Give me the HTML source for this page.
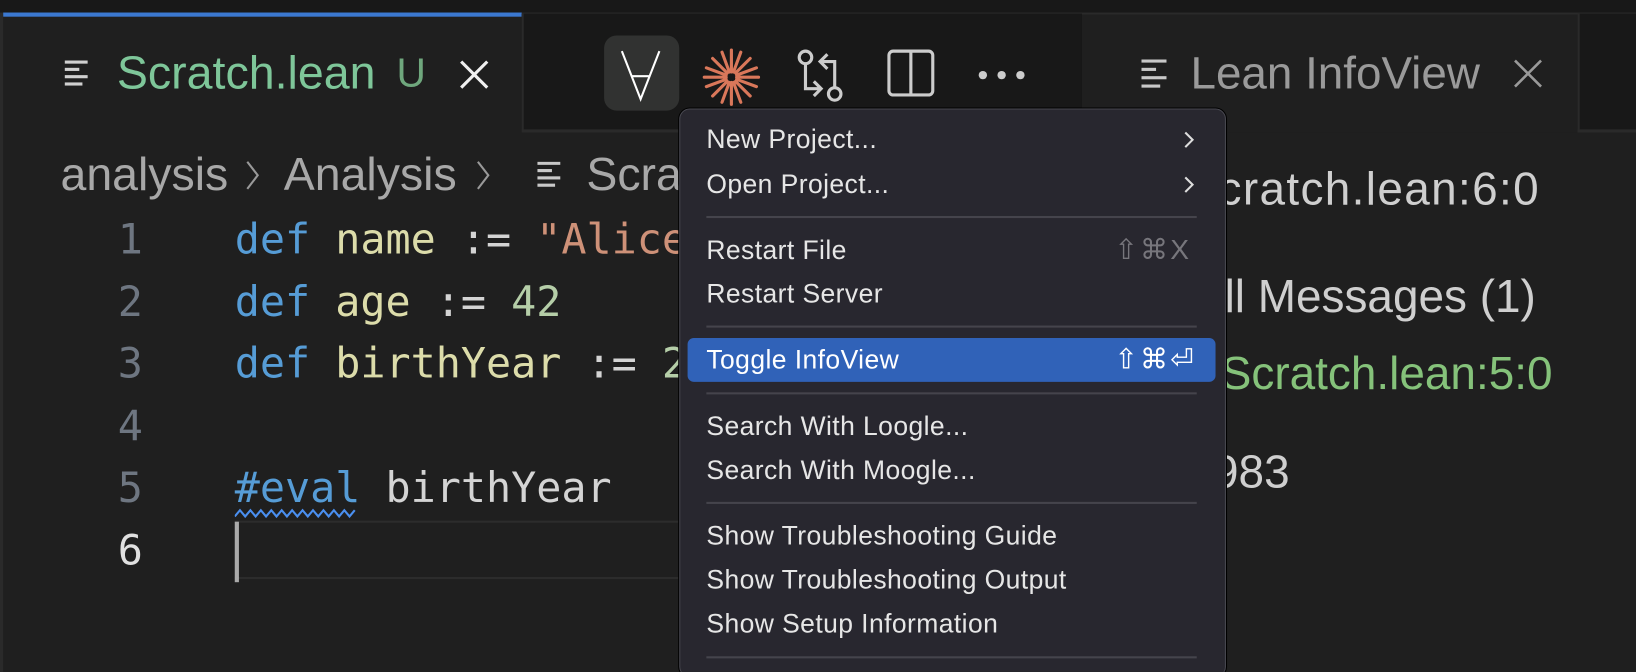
<!DOCTYPE html>
<html style="overflow:hidden;height:672px"><head><style>
*{margin:0;padding:0;box-sizing:border-box}
body{width:1636px;height:672px;overflow:hidden;background:#1f1f1f;font-family:"Liberation Sans",sans-serif;position:relative}
#w{position:absolute;left:0;top:0;width:1568px;height:644px;overflow:hidden;transform:scale(1.04337);transform-origin:0 0}
.a{position:absolute;white-space:nowrap}
.mono{font-family:"DejaVu Sans Mono","Liberation Mono",monospace;font-size:40px}
.mi{position:absolute;left:677px;font-size:25.4px;letter-spacing:0.4px;color:#e6e6e6}
.sep{position:absolute;left:677px;width:470px;height:2px;background:#45444c}
.iv{position:absolute;white-space:nowrap;font-size:44px;color:#cfcfcf}
</style></head><body><div id="w">
<div class="a" style="left:0;top:0;width:1568px;height:12px;background:#181818"></div>
<div class="a" style="left:0;top:12px;width:1568px;height:2px;background:#2a2a2a"></div>
<!-- left tab -->
<div class="a" style="left:3px;top:12px;width:497px;height:4px;background:#3b78d0"></div>
<div class="a" style="left:0;top:12px;width:3px;height:632px;background:#2a2a2a"></div>
<div class="a" style="left:500px;top:13px;width:537px;height:114px;background:#181818;border-left:2px solid #2a2a2a;border-bottom:3px solid #2a2a2a"></div>
<svg class="a" style="left:62px;top:58px" width="30" height="30"><g fill="#d0d0d0"><rect x="0" y="0" width="22" height="3"/><rect x="0" y="7" width="14" height="3"/><rect x="0" y="14" width="22" height="3"/><rect x="0" y="21" width="17" height="3"/></g></svg>
<div class="a" style="left:112px;top:46px;font-size:44.6px;color:#7ec699">Scratch.lean</div>
<div class="a" style="left:380px;top:49px;font-size:39px;color:#6fa77d">U</div>
<svg class="a" style="left:440px;top:57px" width="30" height="30"><path d="M2 2L27 27M27 2L2 27" stroke="#f0f0f0" stroke-width="3"/></svg>
<!-- toolbar icons -->
<div class="a" style="left:579px;top:34px;width:72px;height:72px;background:#313231;border-radius:12px"></div>
<svg class="a" style="left:590px;top:45px" width="50" height="55"><path d="M6 4L24 50L42 4M15 28H33" stroke="#fff" stroke-width="2" fill="none"/></svg>
<svg class="a" style="left:672px;top:45px" width="58" height="58"><g stroke="#d9775a" stroke-width="3" stroke-linecap="round"><path d="M29 3V24M29 34V55M3 29H24M34 29H55M11 11L25 25M33 33L47 47M47 11L33 25M25 33L11 47M20 5L27 24M31 34L38 53M38 5L31 24M27 34L20 53M5 20L24 27M34 31L53 38M5 38L24 31M34 27L53 20"/></g></svg>
<svg class="a" style="left:762px;top:45px" width="50" height="55"><g stroke="#ccc" stroke-width="3" fill="none"><circle cx="10" cy="10" r="6"/><circle cx="38" cy="45" r="6"/><path d="M10 16V40H24M18 33L25 40L18 47"/><path d="M38 39V14H24M31 7L24 14L31 21"/></g></svg>
<svg class="a" style="left:850px;top:47px" width="48" height="48"><rect x="2" y="2" width="42" height="42" rx="4" stroke="#ccc" stroke-width="3" fill="none"/><path d="M23 2V44" stroke="#ccc" stroke-width="3"/></svg>
<div class="a" style="left:938px;top:68px;width:8px;height:8px;border-radius:4px;background:#ccc;box-shadow:18px 0 #ccc,36px 0 #ccc"></div>
<!-- right tab -->
<div class="a" style="left:1037px;top:14px;width:475px;height:113px;background:#1f1f1f"></div>
<div class="a" style="left:1512px;top:13px;width:56px;height:114px;background:#181818;border-left:2px solid #2a2a2a;border-bottom:3px solid #2a2a2a"></div>
<svg class="a" style="left:1094px;top:57px" width="30" height="30"><g fill="#c8c8c8"><rect x="0" y="0" width="24" height="3"/><rect x="0" y="8" width="14" height="3"/><rect x="0" y="16" width="24" height="3"/><rect x="0" y="24" width="18" height="3"/></g></svg>
<div class="a" style="left:1141px;top:46px;font-size:43.9px;color:#9a9a9a">Lean InfoView</div>
<svg class="a" style="left:1450px;top:56px" width="30" height="30"><path d="M2 2L27 27M27 2L2 27" stroke="#9a9a9a" stroke-width="2.5"/></svg>
<!-- breadcrumb -->
<div class="a" style="left:58px;top:143px;font-size:44.5px;color:#a8a8a8">analysis</div>
<svg class="a" style="left:234px;top:152px" width="16" height="32"><path d="M3 3L13 16L3 29" stroke="#999" stroke-width="2" fill="none"/></svg>
<div class="a" style="left:272px;top:143px;font-size:44.5px;color:#a8a8a8">Analysis</div>
<svg class="a" style="left:455px;top:152px" width="16" height="32"><path d="M3 3L13 16L3 29" stroke="#999" stroke-width="2" fill="none"/></svg>
<svg class="a" style="left:515px;top:155px" width="30" height="30"><g fill="#c8c8c8"><rect x="0" y="0" width="22" height="3"/><rect x="0" y="7" width="14" height="3"/><rect x="0" y="14" width="22" height="3"/><rect x="0" y="21" width="17" height="3"/></g></svg>
<div class="a" style="left:562px;top:143px;font-size:44.5px;color:#a8a8a8">Scratch.lean</div>
<!-- code -->
<div class="a mono" style="left:85px;top:201px;color:#6e7681;line-height:59.5px;text-align:right;width:52px">1<br>2<br>3<br>4<br>5<br><span style="color:#e0e0e0">6</span></div>
<div class="a" style="left:225px;top:499px;width:500px;height:56px;border-top:2px solid #2c2c2c;border-bottom:2px solid #2c2c2c"></div>
<div class="a" style="left:225px;top:500px;width:4px;height:58px;background:#aaa"></div>
<div class="a mono" style="left:225px;top:201px;line-height:59.5px;color:#d4d4d4">
<span style="color:#569cd6">def</span> <span style="color:#dcdcaa">name</span> := <span style="color:#ce9178">"Alice"</span><br>
<span style="color:#569cd6">def</span> <span style="color:#dcdcaa">age</span> := <span style="color:#b5cea8">42</span><br>
<span style="color:#569cd6">def</span> <span style="color:#dcdcaa">birthYear</span> := <span style="color:#b5cea8">2025</span><br><br>
<span style="color:#569cd6">#eval</span> birthYear</div>
<svg class="a" style="left:225px;top:486px" width="120" height="12"><path d="M0 9L5 3L10 9L15 3L20 9L25 3L30 9L35 3L40 9L45 3L50 9L55 3L60 9L65 3L70 9L75 3L80 9L85 3L90 9L95 3L100 9L105 3L110 9L115 3" stroke="#4a8ff0" stroke-width="2" fill="none"/></svg>
<!-- infoview -->
<div class="iv" style="right:92px;top:157px;letter-spacing:1.3px">Scratch.lean:6:0</div>
<div class="iv" style="right:96px;top:260px">All Messages (1)</div>
<div class="iv" style="right:80px;top:334px;color:#85c27a">Scratch.lean:5:0</div>
<div class="iv" style="right:332px;top:428px">1983</div>
<!-- menu -->
<div class="a" style="left:651px;top:104px;width:524px;height:545px;background:#28272f;border:1px solid #4a4a52;border-radius:10px;box-shadow:0 0 0 1px #000"></div>
<div class="mi" style="top:120px">New Project...</div>
<div class="mi" style="top:163px">Open Project...</div>
<svg class="a" style="left:1133px;top:125px" width="14" height="70"><path d="M3 2L10 9L3 16M3 45L10 52L3 59" stroke="#ddd" stroke-width="2" fill="none"/></svg>
<div class="sep" style="top:207px"></div>
<div class="mi" style="top:226px">Restart File</div>
<div class="a" style="left:1068px;top:224px;font-size:27px;letter-spacing:2px;color:#77767c">⇧⌘X</div>
<div class="mi" style="top:268px">Restart Server</div>
<div class="sep" style="top:312px"></div>
<div class="a" style="left:659px;top:324px;width:506px;height:42px;background:#3062b8;border-radius:6px"></div>
<div class="mi" style="top:331px;color:#fff">Toggle InfoView</div>
<div class="a" style="left:1068px;top:329px;font-size:27px;letter-spacing:2px;color:#fff">⇧⌘⏎</div>
<div class="sep" style="top:376px"></div>
<div class="mi" style="top:395px">Search With Loogle...</div>
<div class="mi" style="top:437px">Search With Moogle...</div>
<div class="sep" style="top:481px"></div>
<div class="mi" style="top:500px">Show Troubleshooting Guide</div>
<div class="mi" style="top:542px">Show Troubleshooting Output</div>
<div class="mi" style="top:584px">Show Setup Information</div>
<div class="sep" style="top:629px"></div>
</div></body></html>
